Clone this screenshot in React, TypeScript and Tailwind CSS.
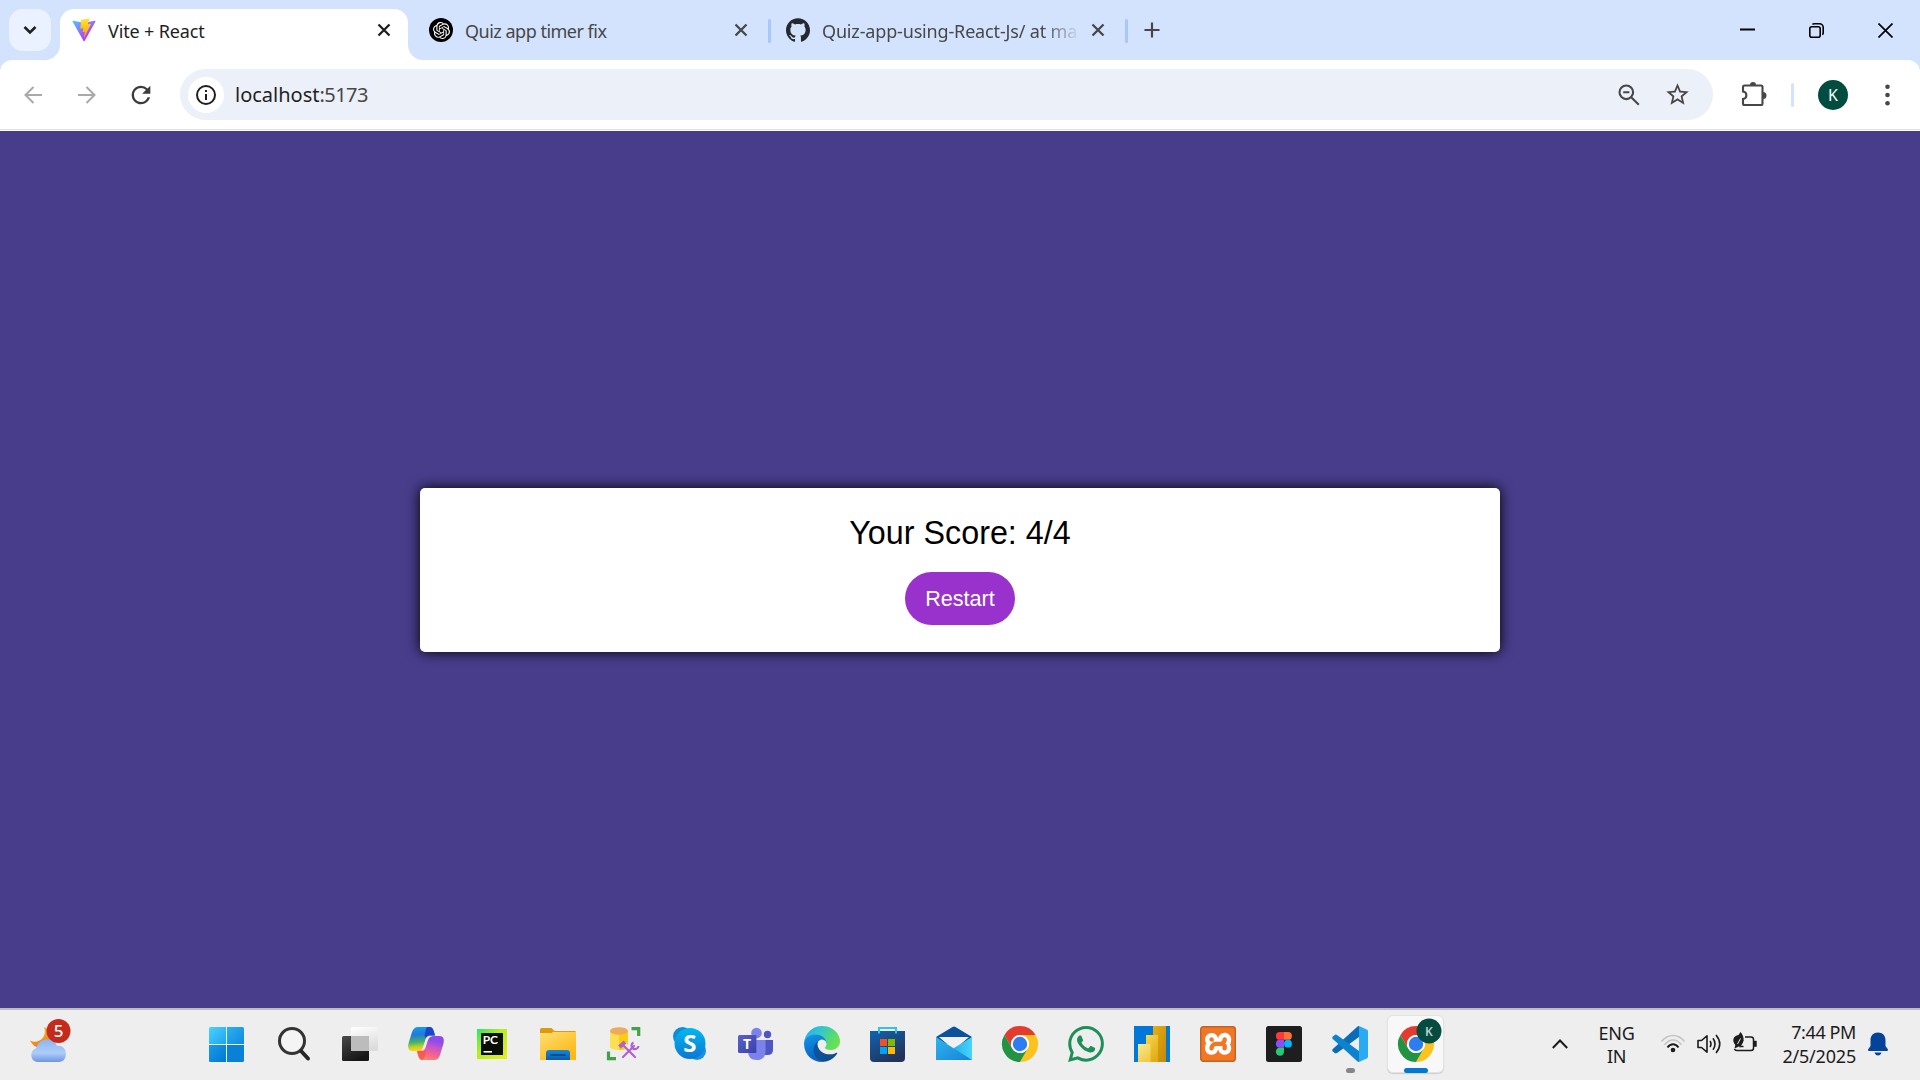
import React from 'react';
import { SiGithub, SiOpenai, SiWhatsapp, SiXampp } from 'react-icons/si';
import { MdRefresh, MdStarBorder } from 'react-icons/md';

const ui = "font-['Noto_Sans',sans-serif]";

function ViteLogo() {
  return (
    <svg className="size-6 shrink-0" viewBox="0 0 410 404" fill="none">
      <defs>
        <linearGradient id="viteA" x1="6" y1="33" x2="235" y2="344" gradientUnits="userSpaceOnUse">
          <stop stopColor="#41D1FF" />
          <stop offset="1" stopColor="#BD34FE" />
        </linearGradient>
        <linearGradient id="viteB" x1="194.651" y1="8.818" x2="236.076" y2="292.989" gradientUnits="userSpaceOnUse">
          <stop stopColor="#FFEA83" />
          <stop offset="0.083" stopColor="#FFDD35" />
          <stop offset="1" stopColor="#FFA800" />
        </linearGradient>
      </defs>
      <path fill="url(#viteA)" d="M399.641 59.5246L215.643 388.545C211.844 395.338 202.084 395.378 198.228 388.618L10.5817 59.5563C6.38087 52.1896 12.6802 43.2665 21.0281 44.7586L205.223 77.6824C206.398 77.8924 207.601 77.8904 208.776 77.6763L389.119 44.8058C397.439 43.2894 403.768 52.1434 399.641 59.5246Z" />
      <path fill="url(#viteB)" d="M292.965 1.5744L156.801 28.2552C154.563 28.6937 152.906 30.5903 152.771 32.8664L144.395 174.33C144.198 177.662 147.258 180.248 150.51 179.498L188.42 170.749C191.967 169.931 195.172 173.055 194.443 176.622L183.18 231.775C182.422 235.487 185.907 238.661 189.532 237.56L212.947 230.446C216.577 229.344 220.065 232.527 219.297 236.242L201.398 322.875C200.278 328.294 207.486 331.249 210.492 326.603L212.5 323.5L323.454 102.072C325.312 98.3645 322.108 94.137 318.036 94.9228L279.014 102.454C275.347 103.161 272.227 99.746 273.262 96.1583L298.731 7.86689C299.767 4.27314 296.636 0.855181 292.965 1.5744Z" />
    </svg>
  );
}

function CloseX({ color }: { color: string }) {
  return (
    <svg className="size-[14px] shrink-0" viewBox="0 0 14 14" stroke={color} strokeWidth="2.3">
      <path d="M1.5 1.5 12.5 12.5M12.5 1.5 1.5 12.5" />
    </svg>
  );
}

function TabStrip() {
  return (
    <div className="flex h-[60px] items-center">
      <button className="ml-[9px] flex size-[42px] shrink-0 items-center justify-center rounded-[14px] bg-[#ebf2ff]">
        <svg className="size-[14px]" viewBox="0 0 14 14" fill="none" stroke="#1f1f1f" strokeWidth="2.6">
          <path d="M1.5 4 7 9.5 12.5 4" />
        </svg>
      </button>
      <div className="relative ml-[9px] mt-[9px] flex h-[51px] w-[348px] shrink-0 items-center rounded-t-[14px] bg-white pb-[9px] pl-3 pr-[17px]">
        <span className="absolute bottom-0 -left-[15px] size-[15px] bg-[radial-gradient(circle_at_0_0,transparent_14.5px,#fff_15.5px)]" />
        <span className="absolute bottom-0 -right-[15px] size-[15px] bg-[radial-gradient(circle_at_100%_0,transparent_14.5px,#fff_15.5px)]" />
        <ViteLogo />
        <span className="ml-3 flex-1 pt-[1px] text-[18px] leading-6 tracking-[-0.15px] text-[#1f1f1f]">Vite + React</span>
        <CloseX color="#1f1f1f" />
      </div>
      <div className="ml-[21px] flex w-[319px] shrink-0 items-center">
        <span className="flex size-6 shrink-0 items-center justify-center rounded-full bg-black">
          <SiOpenai className="size-[17px] text-white" />
        </span>
        <span className="ml-3 flex-1 pt-[1px] text-[18px] leading-6 tracking-[-0.5px] text-[#474747]">Quiz app timer fix</span>
        <CloseX color="#474747" />
      </div>
      <span className="ml-5 mt-[2px] h-6 w-[3px] shrink-0 rounded-full bg-[#a8c7fa]" />
      <div className="ml-[15px] flex w-[319px] shrink-0 items-center">
        <SiGithub className="size-6 shrink-0 text-[#24292f]" />
        <span className="ml-3 mr-[12px] w-[257px] overflow-hidden pt-[1px] text-[18px] leading-6 tracking-[-0.16px] whitespace-nowrap text-[#474747] [mask-image:linear-gradient(to_right,#000_220px,transparent_258px)]">
          Quiz-app-using-React-Js/ at ma
        </span>
        <CloseX color="#474747" />
      </div>
      <span className="ml-5 mt-[2px] h-6 w-[3px] shrink-0 rounded-full bg-[#a8c7fa]" />
      <svg className="ml-4 size-4 shrink-0" viewBox="0 0 16 16" stroke="#474747" strokeWidth="2.2">
        <path d="M8 .5v15M.5 8h15" />
      </svg>
      <div className="ml-auto mr-[27px] flex items-center gap-[54px]">
        <svg className="size-[15px]" viewBox="0 0 15 15" stroke="#000" strokeWidth="2"><path d="M0 6.500h15" /></svg>
        <svg className="size-[15px]" viewBox="0 0 15 15" fill="none" stroke="#000" strokeWidth="1.6">
          <rect x=".8" y="3.8" width="10.4" height="10.4" rx="2" />
          <path d="M3.4 1.3C4 .9 4.600 .8 5.300 .8H10.500A3.700 3.700 0 0 1 14.200 4.500V9.500C14.200 10.500 14 11.200 13.400 11.800" />
        </svg>
        <svg className="size-[15px]" viewBox="0 0 15 15" stroke="#000" strokeWidth="1.7"><path d="M.5.5l14 14M14.500.5l-14 14" /></svg>
      </div>
    </div>
  );
}

function NavArrow({ flip }: { flip?: boolean }) {
  return (
    <svg className={flip ? 'size-[18px] rotate-180' : 'size-[18px]'} viewBox="0 0 18 18" fill="none" stroke="#a9a9a9" strokeWidth="2">
      <path d="M18 9H1.500M9.500 1 1.500 9l8 8" />
    </svg>
  );
}

function Toolbar() {
  return (
    <div className="flex h-[71px] flex-col rounded-t-[12px] bg-white">
      <div className="flex h-[70px] items-center border-b border-[#dfe1e5]">
        <div className="ml-6 flex w-[156px] items-center pt-[1px]">
          <NavArrow />
          <span className="ml-9 flex"><NavArrow flip /></span>
          <MdRefresh className="ml-[31px] size-[28px] text-[#3c3c3c]" />
        </div>
        <div className="flex h-[51px] w-[1533px] items-center rounded-full bg-[#ecf0f9] pl-[8px] pr-[22px]">
          <span className="flex size-9 items-center justify-center rounded-full bg-white">
            <svg className="size-5" viewBox="0 0 20 20" fill="none" stroke="#1f1f1f" strokeWidth="2">
              <circle cx="10" cy="10" r="9" />
              <path d="M10 9v6M10 5v2" />
            </svg>
          </span>
          <span className="ml-[11px] text-[20px] leading-6 text-[#1f1f1f]">
            localhost<span className="tracking-[-0.55px] text-[#474747]">:5173</span>
          </span>
          <svg className="ml-auto size-[22px]" viewBox="0 0 22 22" fill="none" stroke="#474747" strokeWidth="2.1">
            <circle cx="8.300" cy="8.300" r="6.800" />
            <path d="M5.200 8.300h6.200M13.200 13.200l7.600 7.600" />
          </svg>
          <MdStarBorder className="ml-[24px] size-[27px] text-[#474747]" />
        </div>
        <svg className="ml-7 size-[26px]" viewBox="0 0 26 26" fill="none" stroke="#474747" strokeWidth="2.100">
          <path d="M3.500 3.500H20a1.500 1.500 0 0 1 1.500 1.500V21.500a1.500 1.500 0 0 1-1.500 1.500H3.500A1.500 1.500 0 0 1 2 21.500V17C6.500 16.500 6.500 10 2 9.500V5A1.500 1.500 0 0 1 3.500 3.500Z" />
          <path d="M9 3a3 3 0 0 1 6 0ZM22 10a3.500 3.500 0 0 1 0 7Z" fill="#474747" stroke="none" />
        </svg>
        <span className="ml-[24px] h-6 w-[3px] rounded-full bg-[#d3e3fd]" />
        <span className="ml-6 flex size-[30px] items-center justify-center rounded-full bg-[#004d40] text-[16px] leading-none text-white">K</span>
        <svg className="ml-[37px] h-[22px] w-[5px]" viewBox="0 0 5 22" fill="#474747">
          <circle cx="2.500" cy="2.700" r="2.300" /><circle cx="2.500" cy="11" r="2.300" /><circle cx="2.500" cy="19.300" r="2.300" />
        </svg>
      </div>
    </div>
  );
}

function Icon({ children, extra }: { children: React.ReactNode; extra?: React.ReactNode }) {
  return (
    <div className="relative flex w-[66px] justify-center">
      {extra}
      <svg className="relative size-9 overflow-visible" viewBox="0 0 36 36">{children}</svg>
    </div>
  );
}

function ChromeMark() {
  return (
    <>
      <path fill="#e33b2e" d="M2.410 9A18 18 0 0 1 33.590 9L18 9A9 9 0 0 0 10.200 22.500Z" />
      <path fill="#fcc31e" d="M33.590 9A18 18 0 0 1 18 36L25.800 22.500A9 9 0 0 0 18 9Z" />
      <path fill="#229342" d="M18 36A18 18 0 0 1 2.410 9L10.200 22.500A9 9 0 0 0 25.800 22.500Z" />
      <circle cx="18" cy="18" r="9" fill="#fff" />
      <circle cx="18" cy="18" r="7.200" fill="#2f7cf0" />
    </>
  );
}

function Gradients() {
  const g = (id: string, dir: [number, number], stops: [number, string][]) => (
    <linearGradient key={id} id={id} x1="0" y1="0" x2={dir[0]} y2={dir[1]}>
      {stops.map(([o, c]) => <stop key={o} offset={o} stopColor={c} />)}
    </linearGradient>
  );
  return (
    <svg className="h-0 w-0">
      <defs>
        {g('moon', [0.3, 1], [[0, '#f5c035'], [1, '#ee7f12']])}
        {g('cloud', [0, 1], [[0, '#8fb3f0'], [0.6, '#adcdf9'], [1, '#6f95e3']])}
        {g('tvDark', [0.5, 1], [[0, '#4a4a4a'], [1, '#161616']])}
        {g('tvLight', [0.3, 1], [[0, '#ffffff'], [1, '#dcdcdc']])}
        {g('cpA', [0.1, 1], [[0, '#14a0ea'], [0.35, '#2179dc'], [0.65, '#43b26c'], [0.85, '#c3cf28'], [1, '#ffd60a']])}
        {g('cpB', [-0.3, 1], [[0, '#8d4bea'], [0.25, '#c355cf'], [0.55, '#f5618c'], [0.85, '#ff8a68'], [1, '#ffb27a']])}
        {g('pc', [1, 1], [[0, '#21e86b'], [0.4, '#b4ec21'], [1, '#e6f01c']])}
        {g('folder', [0.7, 1], [[0, '#ffdf76'], [1, '#fbb813']])}
        {g('folderTab', [0, 1], [[0, '#1a86d9'], [1, '#0a5cab']])}
        {g('skype', [0, 1], [[0, '#05b7ef'], [1, '#0a78d4']])}
        {g('teams', [1, 1], [[0, '#5a62c8'], [1, '#3940ab']])}
        {g('edA', [1, 0.4], [[0, '#0c59a4'], [1, '#114a8b']])}
        {g('edB', [0.3, 1], [[0, '#1b9de2'], [0.5, '#0b7bd8'], [1, '#0a62bd']])}
        {g('edC', [1, 0.45], [[0, '#25a9e8'], [0.4, '#30c3d8'], [0.75, '#4fd684'], [1, '#66e252']])}
        {g('store', [0.6, 1], [[0, '#0f64b4'], [1, '#233258']])}
        {g('mailR', [1, 0], [[0, '#28b0ee'], [1, '#45d6f8']])}
        {g('mailL', [1, 1], [[0, '#2fb5f0'], [1, '#1683d8']])}
        {g('pbA', [1, 1], [[0, '#e8ae15'], [1, '#c48806']])}
        {g('pbB', [0.5, 1], [[0, '#f7d64c'], [1, '#e3ad1a']])}
        {g('pbC', [0.5, 1], [[0, '#fbe98c'], [1, '#f0cc4c']])}
        {g('wA', [1, 1], [[0, '#4ad2ff'], [1, '#1fa4ee']])}
        {g('wB', [1, 1], [[0, '#2cb0f2'], [1, '#0f8ade']])}
        {g('wC', [1, 1], [[0, '#1c9ae8'], [1, '#0078d4']])}
      </defs>
    </svg>
  );
}

function TaskIcons() {
  return (
    <div className="flex h-[70px] items-center pb-[2px]">
      <Icon>
        <g transform="translate(-1 1)">
          <path fill="url(#wA)" d="M1.500 0H17V17H0V1.500Q0 0 1.500 0" />
          <path fill="url(#wB)" d="M18 0H33.500Q35 0 35 1.500V17H18Z" />
          <path fill="url(#wC)" d="M0 18H17V35H1.500Q0 35 0 33.500Z" />
          <path fill="#0a80d8" d="M18 18H35V33.500Q35 35 33.500 35H18Z" />
        </g>
      </Icon>
      <Icon>
        <circle cx="16" cy="15" r="12.500" fill="#f4f4f4" stroke="#333" strokeWidth="3" />
        <path d="M25.500 25.500 32 32.500" stroke="#262626" strokeWidth="4" strokeLinecap="round" />
      </Icon>
      <Icon>
        <rect y="10" width="27" height="25" rx="1.500" fill="url(#tvDark)" />
        <rect x="9" y="1" width="27" height="24" rx="1.500" fill="url(#tvLight)" />
        <path d="M9 10H27V25H10.500Q9 25 9 23.500Z" fill="#bcbcbc" />
      </Icon>
      <Icon>
        <path fill="url(#cpA)" d="M10 1H21.500C24 1 25 2.500 26 6L27 9.500H23C20 9.500 18.500 10.500 17.500 14L15 21.500C14 24.500 12 25 9 25H4.500C.5 25-.5 22 .5 17.500L4 6C5 3 7 1 10 1Z" />
        <path fill="#1b44cf" d="M19 1H21.500C24 1 25 2.500 26 6L27 9.500H23C20.500 9.500 19 10 18 12L16.500 10C17.500 6 17.500 3 19 1Z" />
        <path fill="url(#cpB)" d="M26 34H14.500C12 34 11 32.500 10 29L9 25C13 25 14 25 15.500 21.500L18.500 13.500C19.500 10.500 22 10 27 10H31.500C35.500 10 36.500 13 35.500 17.500L32 29C31 32 29 34 26 34Z" />
        <path fill="#f6543e" d="M9 25C12 25 14 25 15.500 22L18 25C17 29 17 32 14.500 34C12 34 11 32.500 10 29Z" opacity=".7" />
        <path fill="#eee" d="M17.500 14Q18.500 10 22 10H24Q21 11 20 14L17.500 21.500Q16.500 25 13 25Q15 23 15.500 20Z" />
      </Icon>
      <Icon>
        <rect x="3" y="3" width="30" height="30" fill="url(#pc)" />
        <rect x="7" y="7" width="22" height="22" fill="#0a0f06" />
        <text x="8.700" y="18" fontSize="12" fontWeight="700" fill="#fff" fontFamily="Lato, sans-serif">PC</text>
        <rect x="9.500" y="25" width="8.500" height="1.600" fill="#fff" />
      </Icon>
      <Icon>
        <path d="M0 3.500Q0 2 1.500 2H11.500L15 5.500 11.500 9H0Z" fill="#dc9b0b" />
        <path d="M0 7H11.500L15 5H34.500Q36 5 36 6.500V34H0Z" fill="url(#folder)" />
        <path d="M14 5.500H35.500" stroke="#d99b17" />
        <path d="M6 34V27Q6 24 9 24H27Q30 24 30 27V34Z" fill="url(#folderTab)" />
        <path d="M11 29H25" stroke="#08447f" strokeWidth="1.600" strokeLinecap="round" />
      </Icon>
      <Icon>
        <path d="M4 5V21C4 25 22 25 22 21V5Z" fill="#fbe053" />
        <path d="M13 5H22V21C22 23 17 24 13 24Z" fill="#fbcd0c" />
        <ellipse cx="13" cy="5" rx="9" ry="3.800" fill="#eeaa5c" />
        <path d="M25.500 2.700H32.700V10M2.500 25.500V32.700H10" fill="none" stroke="#45a04a" strokeWidth="3.200" />
        <path d="M16 31 28 18M18 18 29 31" stroke="#eee" strokeWidth="4.500" />
        <path d="M17 31 28 20M18 20 29 31" stroke="#b060d0" strokeWidth="2.200" strokeLinecap="round" />
        <path d="M13.500 21 19 16" stroke="#b060d0" strokeWidth="4" />
        <path d="M27.500 16.500A3.500 3.500 0 1 0 32.500 20" fill="none" stroke="#b060d0" strokeWidth="2.200" />
      </Icon>
      <Icon>
        <circle cx="10.500" cy="10.500" r="9.500" fill="#0d8dd6" />
        <circle cx="25" cy="25" r="9" fill="#1a90e4" />
        <circle cx="18" cy="17.500" r="15.500" fill="url(#skype)" />
        <text x="17.800" y="26" fontSize="24" fontWeight="700" textAnchor="middle" fill="#fff" fontFamily="Open Sans, sans-serif">S</text>
      </Icon>
      <Icon>
        <circle cx="29.500" cy="8.500" r="3.700" fill="#4f56c4" />
        <path d="M24 14H35V24Q35 29 29.500 29H26Z" fill="#4f56c4" />
        <circle cx="18.500" cy="7" r="5.300" fill="#7b83eb" />
        <path d="M10 14H27.500V25Q27.500 34 18.700 34Q10 34 10 25Z" fill="#7b83eb" />
        <path d="M11 9H18.500V27H11Z" fill="#5059c0" />
        <rect y="9" width="18" height="18" rx="1.500" fill="url(#teams)" />
        <text x="9" y="23" fontSize="14" fontWeight="700" textAnchor="middle" fill="#fff" fontFamily="Open Sans, sans-serif">T</text>
      </Icon>
      <Icon>
        <g transform="scale(.1406) translate(-4.630 -4.920)">
          <path fill="url(#edA)" d="M235.680 195.460a93.730 93.730 0 0 1-10.540 4.710 101.870 101.870 0 0 1-35.900 6.460c-47.320 0-88.540-32.550-88.540-74.320A31.480 31.480 0 0 1 117.130 105c-42.800 1.800-53.800 46.400-53.800 72.530 0 73.880 68.090 81.370 82.760 81.370 7.910 0 19.840-2.300 27-4.560l1.310-.44a128.340 128.340 0 0 0 66.600-52.800 4 4 0 0 0-5.320-5.640z" />
          <path fill="url(#edB)" d="M110.340 246.340A79.200 79.200 0 0 1 87.600 225a80.720 80.720 0 0 1 29.530-120c3.120-1.470 8.450-4.130 15.540-4a32.350 32.350 0 0 1 25.690 13 31.880 31.880 0 0 1 6.360 18.660c0-.21 24.460-79.600-80-79.600-43.900 0-80 41.660-80 78.210a130.150 130.150 0 0 0 12.110 56 128 128 0 0 0 156.380 67.110 75.550 75.550 0 0 1-62.780-8z" />
          <path fill="url(#edC)" d="M156.940 153.780c-.81 1.050-3.300 2.500-3.300 5.660 0 2.610 1.700 5.120 4.720 7.230 14.380 10 41.490 8.680 41.560 8.680a59.560 59.560 0 0 0 30.270-8.350 61.380 61.380 0 0 0 30.430-52.880c.26-22.410-8-37.310-11.340-43.910C228.090 28.760 182.350 4.900 132.610 4.900a128 128 0 0 0-128 126.200c.48-36.540 36.800-66.050 80-66.050 3.500 0 23.460.34 42 10.070 16.340 8.580 24.900 18.940 30.850 29.210 6.180 10.670 7.280 24.150 7.280 29.520s-2.740 13.330-7.800 19.930z" />
        </g>
      </Icon>
      <Icon>
        <path d="M0 5H35V32Q35 36 31 36H4Q0 36 0 32Z" fill="url(#store)" />
        <path d="M9 7.500V2H26V7.500" fill="none" stroke="#31c1f2" strokeWidth="2" />
        <path d="M10 13h7v7h-7z" fill="#f25022" /><path d="M18 13h7v7h-7z" fill="#7fba00" />
        <path d="M10 21h7v7h-7z" fill="#00a4ef" /><path d="M18 21h7v7h-7z" fill="#ffb900" />
      </Icon>
      <Icon>
        <path d="M0 11 16.500 1Q18 0 19.500 1L36 11 30 18H6Z" fill="#0b519c" />
        <path d="M3 11H33L18 24Z" fill="#f1f1f1" />
        <path d="M36 11V34H18V22Z" fill="url(#mailR)" />
        <path d="M0 11 36 34H0Z" fill="url(#mailL)" />
      </Icon>
      <Icon><ChromeMark /></Icon>
      <Icon><SiWhatsapp size={36} color="#1f8f58" /></Icon>
      <Icon>
        <rect width="36" height="36" fill="#0078d7" />
        <path d="M19 0H32V36H19Z" fill="url(#pbA)" />
        <path d="M12 9H24V36H12Z" fill="url(#pbB)" />
        <path d="M4 18H16.500V36H4Z" fill="url(#pbC)" />
      </Icon>
      <Icon>
        <rect x="2" y="2" width="32" height="32" rx="4" fill="#fff" />
        <SiXampp size={36} color="#f37623" />
        <rect x=".7" y=".7" width="34.600" height="34.600" rx="3" fill="none" stroke="#c0622a" strokeWidth="1.400" />
      </Icon>
      <Icon>
        <rect width="36" height="36" rx="2.500" fill="#1e1e1e" />
        <path d="M18 6H13.800a3.900 3.900 0 0 0 0 7.800H18Z" fill="#ff3737" />
        <path d="M18 6h4a3.900 3.900 0 0 1 0 7.800H18Z" fill="#ff7237" />
        <path d="M18 13.800H13.800a3.900 3.900 0 0 0 0 7.800H18Z" fill="#874fff" />
        <circle cx="22" cy="17.700" r="3.900" fill="#00b6ff" />
        <path d="M18 21.600V25.500a4.100 4.100 0 1 1-4.200-3.900Z" fill="#24cb71" />
      </Icon>
      <Icon extra={<span className="absolute top-[42px] left-[29px] h-[5px] w-[9px] rounded-full bg-[#868686]" />}>
        <path d="M.5 25.300Q-.3 24 .8 23L25 1Q26 0 27 0V11L5 27Q3.700 27.800 2.700 27Z" fill="#0b6bb5" />
        <path d="M.5 10.700Q-.3 12 .8 13L25 35Q26 36 27 36V25L5 9Q3.700 8.200 2.700 9Z" fill="#0b83cf" />
        <path d="M27 0 34.700 3.500Q36 4.200 36 5.500V30.500Q36 31.800 34.700 32.500L27 36Z" fill="#2aaaf2" />
      </Icon>
      <Icon
        extra={
          <>
            <span className="absolute -top-[11px] left-[4px] h-[58px] w-[57px] rounded-md border border-[#e3e3e3] bg-[#f8f8f8] shadow-[0_1px_1px_#ccc]" />
            <span className="absolute top-[42px] left-[21px] h-[5px] w-6 rounded-full bg-[#0078d4]" />
          </>
        }
      >
        <ChromeMark />
        <circle cx="31" cy="5" r="12.500" fill="#064b3f" />
        <text x="31" y="9.500" fontSize="12" textAnchor="middle" fill="#b6d0cb" fontWeight="600" fontFamily="Noto Sans, sans-serif">K</text>
      </Icon>
    </div>
  );
}

function Tray() {
  return (
    <div className="ml-auto flex h-[70px] items-center pr-8 pb-[2px] text-[18px] leading-[23px] text-[#1c1c1c]">
      <svg className="h-[10px] w-4" viewBox="0 0 16 10" fill="none" stroke="#1c1c1c" strokeWidth="2"><path d="M.8 9 8 1.500 15.200 9" /></svg>
      <div className="ml-[30px] w-[37px] pt-[1px] text-center tracking-[-0.3px]">ENG<br />IN</div>
      <svg className="ml-[26px] h-[20px] w-6 overflow-visible" viewBox="0 0 24 20" fill="none" strokeWidth="1.600">
        <path d="M.5 7.500C7-.5 17-.5 23.500 7.500M3.500 10.800C8.500 4.300 15.500 4.300 20.500 10.800" stroke="#c4c4c4" />
        <path d="M6.500 13.500C9.500 9.200 14.500 9.200 17.500 13.500" stroke="#1c1c1c" strokeWidth="1.900" />
        <circle cx="12" cy="16" r="2.300" fill="#1c1c1c" />
      </svg>
      <svg className="ml-3 h-5 w-6" viewBox="0 0 24 20" fill="none" stroke="#1c1c1c" strokeWidth="1.600">
        <path d="M1 6.500H4.500L10 1.800V18.200L4.500 13.500H1Z" strokeLinejoin="round" />
        <path d="M13 7Q15 10 13 13M16 4.300Q20 10 16 15.700M19 1Q26.500 10 19 19" />
      </svg>
      <svg className="ml-3 h-6 w-6 overflow-visible" viewBox="0 0 24 24" fill="none" stroke="#1c1c1c" strokeWidth="1.500">
        <path d="M12 5H18Q20.500 5 20.500 7.500V16Q20.500 18.500 18 18.500H4Q2 18.500 1.500 17" />
        <path d="M22.300 8.800v6" strokeWidth="2.800" />
        <path d="M7.500 0C11 4 12.500 10 7 14L1.500 16.500 2.300 13C-1.500 8 .5 4 5.500 3Z" fill="#1c1c1c" stroke="none" />
        <path d="M7.500 6.500 4.500 12" stroke="#eee" strokeWidth="1" />
        <path d="M10 8 7 14.500H10.500" strokeWidth="1.300" />
      </svg>
      <div className="ml-5 w-[79px] text-right leading-6">
        <div className="tracking-[-0.4px]">7:44 PM</div>
        <div className="tracking-[-0.2px]">2/5/2025</div>
      </div>
      <svg className="ml-[12px] h-6 w-5" viewBox="0 0 20 24" fill="#04439a">
        <path d="M10 .5C14.500.5 17.500 3.500 17.500 8V14L20 17.500Q20 19 19 19H1Q0 19 0 17.500L2.500 14V8C2.500 3.500 5.500.5 10 .5ZM6.500 20.500H13.500Q12.500 23.500 10 23.500 7.500 23.500 6.500 20.500" />
      </svg>
    </div>
  );
}

export default function App() {
  return (
    <div className={`flex h-[1080px] w-[1920px] flex-col overflow-hidden bg-[#d3e3fd] ${ui}`}>
      <TabStrip />
      <Toolbar />
      <main className="flex h-[877px] shrink-0 items-center justify-center bg-[#483d8b] font-['Liberation_Sans',Arial,sans-serif]">
        <section className="flex h-[164px] w-[1080px] flex-col items-center rounded-[5px] bg-white pt-[27px] shadow-[0_0_14px_#000]">
          <h1 className="text-[32.300px] leading-[37px] text-black">Your Score: 4/4</h1>
          <button className="mt-[20px] h-[53px] w-[110px] rounded-full bg-[#9932cc] pt-[1px] text-[21.600px] leading-none tracking-[0px] text-white">Restart</button>
        </section>
      </main>
      <footer className="flex h-[72px] shrink-0 items-start border-t-2 border-[#bdbdbd] bg-[#eee]">
        <div className="flex h-[70px] w-[195px] items-center pb-[3px] pl-[30px]">
          <svg className="h-[38px] w-[42px] overflow-visible" viewBox="0 0 42 38">
            <path d="M14 2C18 12 8 20 0 15.500C2 20 6 23 12 23L22 14C21 8 19 4 14 2Z" fill="url(#moon)" />
            <path d="M7 37A7 7 0 0 1 6 23.500C9 12 24 11 27 21C38 19 39 37 29 37Z" fill="url(#cloud)" />
            <circle cx="28.500" cy="6" r="12" fill="#c42b1c" />
            <text x="28.500" y="12" fontSize="17" fontWeight="500" textAnchor="middle" fill="#fff">5</text>
          </svg>
        </div>
        <TaskIcons />
        <Tray />
      </footer>
      <Gradients />
    </div>
  );
}
